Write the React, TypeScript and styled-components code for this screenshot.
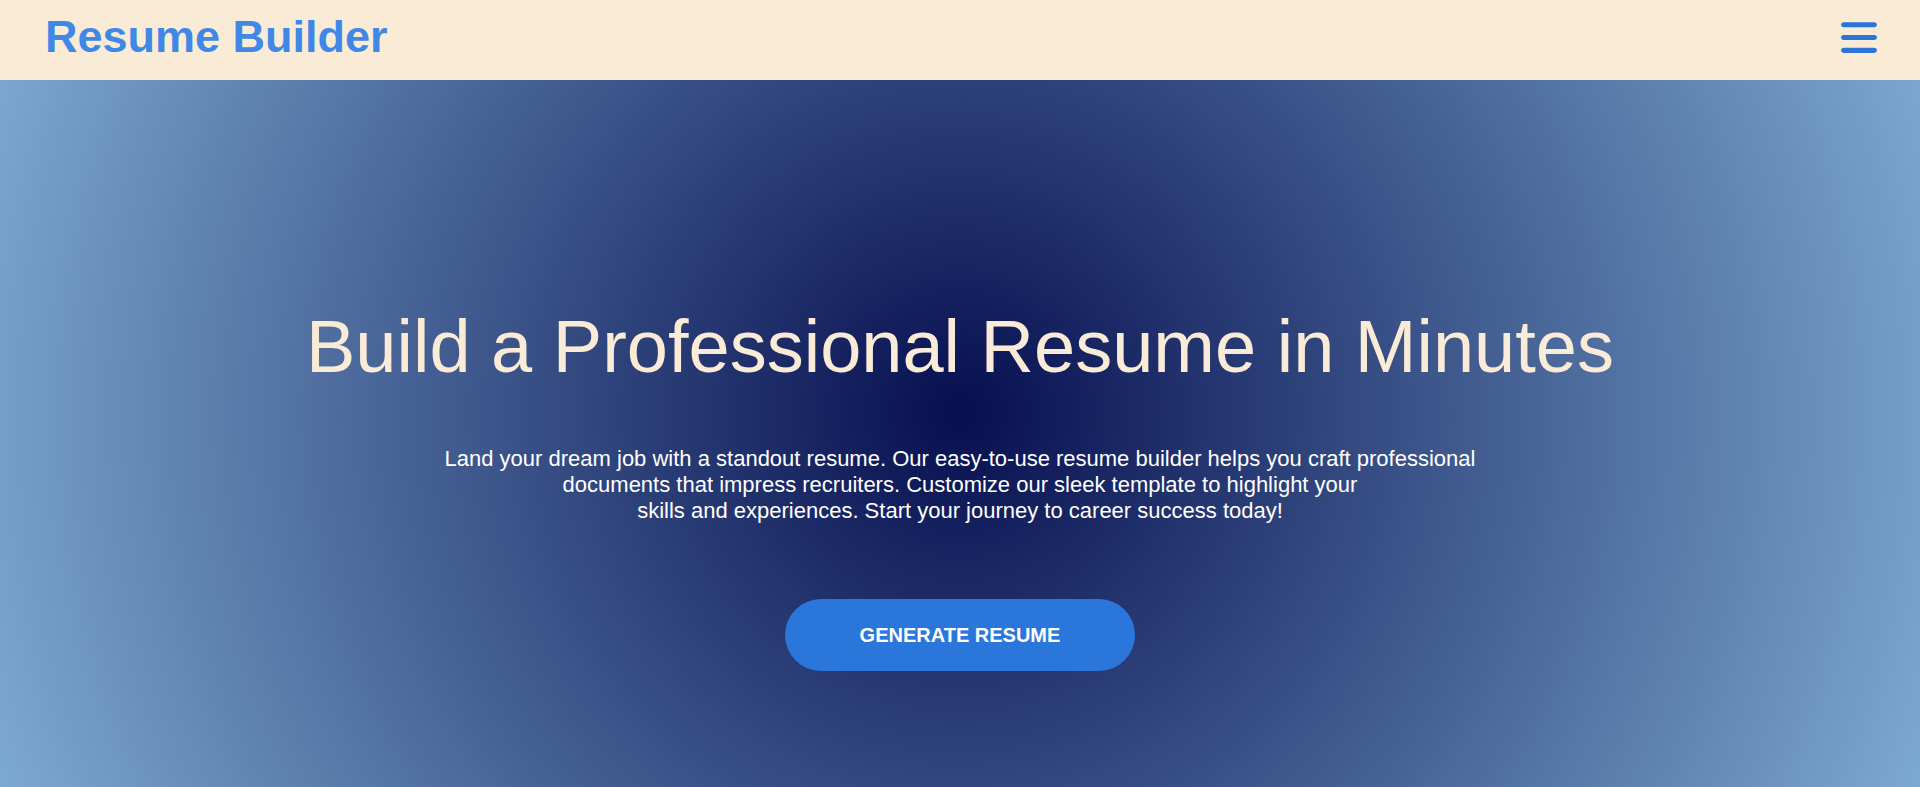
import React from "react";
import styled, { createGlobalStyle } from "styled-components";

const GlobalStyle = createGlobalStyle`
  * { box-sizing: border-box; }
  html, body { margin: 0; padding: 0; }
  body {
    font-family: "Liberation Sans", Arial, sans-serif;
    background: #faebd7;
    overflow: hidden;
  }
`;

const Page = styled.div`
  display: flex;
  flex-direction: column;
  height: 100vh;
`;

const Header = styled.header`
  flex: 0 0 80px;
  height: 80px;
  display: flex;
  align-items: center;
  justify-content: space-between;
  padding: 0 43px 6px 45px;
  background: #faebd7;
`;

const Logo = styled.h1`
  margin: 0;
  font-size: 45px;
  font-weight: 700;
  color: #3f88e6;
  line-height: normal;
`;

const MenuButton = styled.button`
  border: 0;
  padding: 0;
  background: transparent;
  display: flex;
  color: #2b74d8;
  cursor: pointer;
`;

const Hero = styled.main`
  flex: 1;
  display: flex;
  flex-direction: column;
  align-items: center;
  padding-top: 224px;
  background: radial-gradient(circle at 50% 47%, #070f4f 0%, #7ca9d1 100%);
`;

const Title = styled.h2`
  margin: 0;
  font-size: 74px;
  font-weight: 400;
  line-height: normal;
  color: #faebd7;
  text-align: center;
`;

const Lead = styled.p`
  margin: 57px 0 0;
  font-size: 22px;
  line-height: normal;
  color: #ffffff;
  text-align: center;
`;

const CTA = styled.button`
  margin-top: 75px;
  height: 72px;
  padding: 0 75px;
  border: 0;
  border-radius: 36px;
  background: #2a76db;
  color: #ffffff;
  font-family: "Liberation Sans", Arial, sans-serif;
  font-size: 20px;
  font-weight: 700;
  text-transform: uppercase;
  cursor: pointer;
`;

const BarsIcon = () => (
  <svg width="36" height="41" viewBox="0 0 448 512" fill="currentColor" aria-hidden="true">
    <path d="M0 96C0 78.3 14.3 64 32 64H416c17.7 0 32 14.3 32 32s-14.3 32-32 32H32C14.3 128 0 113.7 0 96zM0 256c0-17.7 14.3-32 32-32H416c17.7 0 32 14.3 32 32s-14.3 32-32 32H32c-17.7 0-32-14.3-32-32zM448 416c0 17.7-14.3 32-32 32H32c-17.7 0-32-14.3-32-32s14.3-32 32-32H416c17.7 0 32 14.3 32 32z" />
  </svg>
);

export default function App() {
  return (
    <>
      <GlobalStyle />
      <Page>
        <Header>
          <Logo>Resume Builder</Logo>
          <MenuButton aria-label="Menu">
            <BarsIcon />
          </MenuButton>
        </Header>
        <Hero>
          <Title>Build a Professional Resume in Minutes</Title>
          <Lead>
            Land your dream job with a standout resume. Our easy-to-use resume builder helps you craft professional
            <br />
            documents that impress recruiters. Customize our sleek template to highlight your
            <br />
            skills and experiences. Start your journey to career success today!
          </Lead>
          <CTA>Generate Resume</CTA>
        </Hero>
      </Page>
    </>
  );
}
